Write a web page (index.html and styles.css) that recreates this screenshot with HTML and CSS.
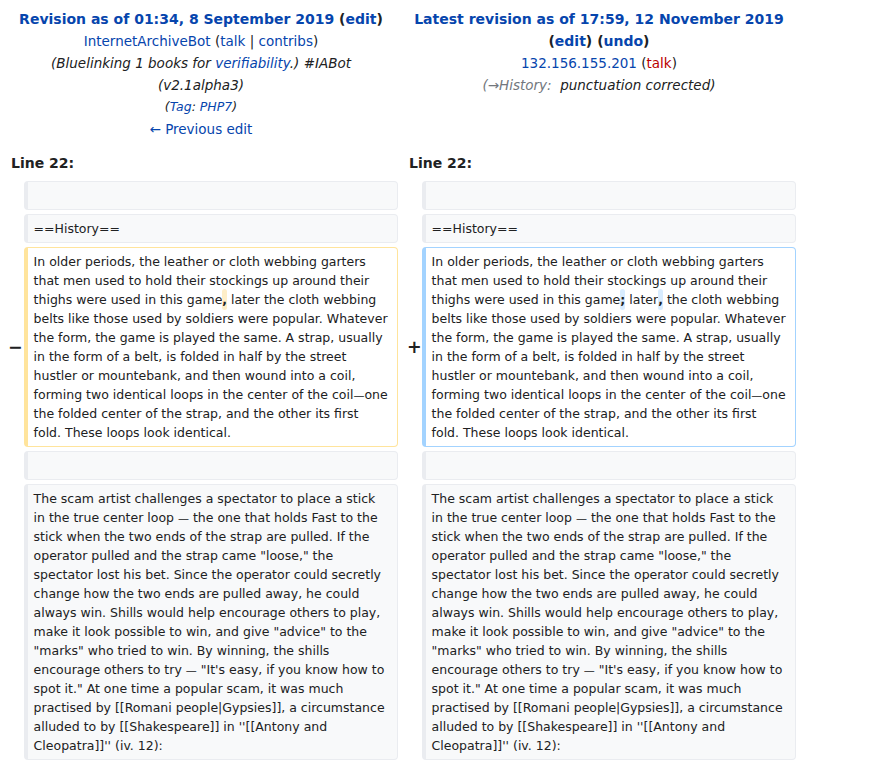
FILE: index.html
```html
<!DOCTYPE html>
<html lang="en">
<head>
<meta charset="utf-8">
<title>Diff</title>
<link rel="stylesheet" href="styles.css">
</head>
<body>
<div class="diff">
  <div class="title-cell">
    <div class="rev-title"><a class="link">Revision as of 01:34, 8 September 2019</a> <span class="paren">(<a class="link">edit</a>)</span></div>
    <div class="meta"><a class="link">InternetArchiveBot</a> (<a class="link">talk</a> | <a class="link">contribs</a>)</div>
    <div class="meta comment">(Bluelinking 1 books for <a class="link">verifiability</a>.) #IABot (v2.1alpha3)</div>
    <div class="tags">(<a class="link">Tag</a>: <a class="link">PHP7</a>)</div>
    <div class="meta"><a class="link">← Previous edit</a></div>
  </div>
  <div class="title-cell">
    <div class="rev-title"><a class="link">Latest revision as of 17:59, 12 November 2019</a> <span class="paren">(<a class="link">edit</a>) (<a class="link">undo</a>)</span></div>
    <div class="meta"><a class="link">132.156.155.201</a> (<a class="link new">talk</a>)</div>
    <div class="meta comment"><span class="auto">(→History:</span>&nbsp; punctuation corrected)</div>
  </div>

  <div class="lineno">Line 22:</div>
  <div class="lineno">Line 22:</div>

  <div class="marker"></div>
  <div class="line context"><div class="txt">&nbsp;</div></div>
  <div class="marker"></div>
  <div class="line context"><div class="txt">&nbsp;</div></div>

  <div class="marker"></div>
  <div class="line context"><div class="txt">==History==</div></div>
  <div class="marker"></div>
  <div class="line context"><div class="txt">==History==</div></div>

  <div class="marker">−</div>
  <div class="line deleted"><div class="txt">In older periods, the leather or cloth webbing garters that men used to hold their stockings up around their thighs were used in this game<del class="chg">,</del> later the cloth webbing belts like those used by soldiers were popular. Whatever the form, the game is played the same. A strap, usually in the form of a belt, is folded in half by the street hustler or mountebank, and then wound into a coil, forming two identical loops in the center of the coil<span class="dash">—</span>one the folded center of the strap, and the other its first fold. These loops look identical.</div></div>
  <div class="marker plus">+</div>
  <div class="line added"><div class="txt">In older periods, the leather or cloth webbing garters that men used to hold their stockings up around their thighs were used in this game<ins class="chg">;</ins> later<ins class="chg">,</ins> the cloth webbing belts like those used by soldiers were popular. Whatever the form, the game is played the same. A strap, usually in the form of a belt, is folded in half by the street hustler or mountebank, and then wound into a coil, forming two identical loops in the center of the coil<span class="dash">—</span>one the folded center of the strap, and the other its first fold. These loops look identical.</div></div>

  <div class="marker"></div>
  <div class="line context"><div class="txt">&nbsp;</div></div>
  <div class="marker"></div>
  <div class="line context"><div class="txt">&nbsp;</div></div>

  <div class="marker"></div>
  <div class="line context"><div class="txt">The scam artist challenges a spectator to place a stick in the true center loop <span class="dash">—</span> the one that holds Fast to the stick when the two ends of the strap are pulled. If the operator pulled and the strap came "loose," the spectator lost his bet. Since the operator could secretly change how the two ends are pulled away, he could always win. Shills would help encourage others to play, make it look possible to win, and give "advice" to the "marks" who tried to win. By winning, the shills encourage others to try <span class="dash">—</span> "It's easy, if you know how to spot it." At one time a popular scam, it was much practised by [[Romani people|Gypsies]], a circumstance alluded to by [[Shakespeare]] in ''[[Antony and Cleopatra]]'' (iv. 12):</div></div>
  <div class="marker"></div>
  <div class="line context"><div class="txt">The scam artist challenges a spectator to place a stick in the true center loop <span class="dash">—</span> the one that holds Fast to the stick when the two ends of the strap are pulled. If the operator pulled and the strap came "loose," the spectator lost his bet. Since the operator could secretly change how the two ends are pulled away, he could always win. Shills would help encourage others to play, make it look possible to win, and give "advice" to the "marks" who tried to win. By winning, the shills encourage others to try <span class="dash">—</span> "It's easy, if you know how to spot it." At one time a popular scam, it was much practised by [[Romani people|Gypsies]], a circumstance alluded to by [[Shakespeare]] in ''[[Antony and Cleopatra]]'' (iv. 12):</div></div>
</div>
</body>
</html>
```

FILE: styles.css
```css
html, body {
  margin: 0;
  padding: 0;
  background: #ffffff;
}

body {
  font-family: "DejaVu Sans", sans-serif;
  font-size: 14px;
  color: #202122;
}

.diff {
  width: 800px;
  box-sizing: border-box;
  display: grid;
  grid-template-columns: 15.6px 374.4px 15.6px 374.4px;
  gap: 4px;
  padding: 4px;
}

.title-cell {
  grid-column: span 2;
  text-align: center;
  line-height: 22px;
  padding-top: 4px;
}

.meta {
  font-size: 13.5px;
}

.link {
  color: #0645ad;
  text-decoration: none;
}

.link.new {
  color: #ba0000;
}

.rev-title {
  font-weight: bold;
}

.comment {
  font-style: italic;
  padding: 0 12px;
}

.auto {
  color: #72777d;
}

.tags {
  font-size: 12.5px;
  font-style: italic;
}

.lineno {
  grid-column: span 2;
  font-weight: bold;
  line-height: 22px;
  padding: 8px 7px 3px;
}

.marker {
  display: flex;
  align-items: center;
  justify-content: flex-end;
  font-weight: bold;
  font-size: 17.5px;
  line-height: 1.2;
  margin-right: -3px;
}

.marker.plus {
  margin-right: -4px;
}

.line {
  font-size: 12.5px;
  line-height: 19px;
  border-style: solid;
  border-width: 1px 1px 1px 4px;
  border-radius: 4px;
  padding: 4px 0;
  background: #ffffff;
}

.line .txt {
  padding: 0 8.2px 0 6px;
  white-space: pre-wrap;
  word-wrap: break-word;
}

.dash {
  font-size: 11px;
  line-height: 1;
}

.context {
  background: #f8f9fa;
  border-color: #eaecf0;
}

.deleted {
  border-color: #ffe49c;
}

.added {
  border-color: #a3d3ff;
}

.chg {
  text-decoration: none;
  font-weight: bold;
  border-radius: 4px;
  padding: 3px 0;
}

.deleted .chg {
  background: #feeec8;
}

.added .chg {
  background: #d8ecff;
}
```
